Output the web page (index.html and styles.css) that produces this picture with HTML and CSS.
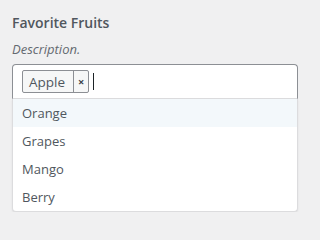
FILE: index.html
```html
<!DOCTYPE html>
<html>
<head>
<meta charset="utf-8">
<link rel="stylesheet" href="styles.css">
</head>
<body>
<div class="field">
  <div class="label">Favorite Fruits</div>
  <div class="desc">Description.</div>
  <div class="select">
    <div class="control">
      <span class="tag"><span class="tag-text">Apple</span><span class="tag-x">×</span></span>
      <span class="caret"></span>
    </div>
    <ul class="menu">
      <li class="opt active">Orange</li>
      <li class="opt">Grapes</li>
      <li class="opt">Mango</li>
      <li class="opt">Berry</li>
    </ul>
  </div>
</div>
</body>
</html>
```
FILE: styles.css
```css
html, body {
  margin: 0;
  padding: 0;
  background: #f0f0f1;
  font-family: "Open Sans", "Noto Sans", sans-serif;
  color: #50575e;
}
.field {
  padding: 14px 13px 0 12px;
}
.label {
  font-size: 14px;
  font-weight: 600;
  line-height: 18px;
  color: #50575e;
}
.desc {
  margin-top: 8px;
  font-size: 13px;
  font-style: italic;
  line-height: 18px;
  color: #646970;
}
.select {
  margin-top: 6px;
  width: 286px;
}
.control {
  box-sizing: border-box;
  height: 35px;
  border: 1px solid #8c8f94;
  border-bottom-color: #dcdcde;
  border-radius: 4px 4px 0 0;
  background: #fff;
  display: flex;
  align-items: center;
  padding: 0 9px;
}
.tag {
  display: flex;
  align-items: stretch;
  height: 23px;
  box-sizing: border-box;
  border: 1px solid #8c8f94;
  border-radius: 2px;
  background: #f6f7f7;
  color: #50575e;
  font-size: 13.5px;
}
.tag-text {
  display: flex;
  align-items: center;
  padding: 0 8px 0 6px;
  border-right: 1px solid #8c8f94;
}
.tag-x {
  display: flex;
  align-items: center;
  padding: 0 4px;
  font-size: 11px;
  font-weight: 700;
  color: #3c434a;
}
.caret {
  width: 1px;
  height: 17px;
  background: #1d2327;
  margin-left: 4px;
}
.menu {
  list-style: none;
  margin: 0;
  padding: 0;
  background: #fff;
  border: 1px solid #dcdcde;
  border-top: none;
  border-radius: 0 0 4px 4px;
  box-shadow: 0 1px 2px rgba(0,0,0,0.08);
}
.opt {
  height: 28px;
  line-height: 28px;
  padding-left: 9px;
  font-size: 13px;
  color: #50575e;
}
.opt.active {
  background: #f3f8fb;
}
```
